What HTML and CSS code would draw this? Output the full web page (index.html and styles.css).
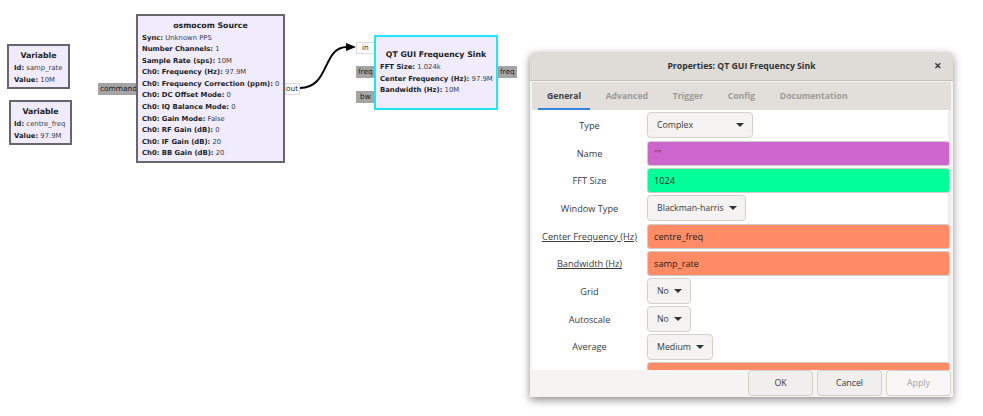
FILE: index.html
```html
<!DOCTYPE html>
<html lang="en">
  <head>
    <meta charset="UTF-8" />
    <meta name="viewport" content="width=device-width, initial-scale=1.0" />
    <title>Flow graph</title>
    <link rel="stylesheet" href="styles.css">
  </head>
  <body>
    <div id="canvas">
      <div class="port gray port-command">command</div>
      <div class="port port-out">out</div>
      <div class="port port-in">in</div>
      <div class="port gray port-freq">freq</div>
      <div class="port gray port-bw">bw</div>
      <div class="port gray port-freq-out">freq</div>

      <svg class="wire" width="60" height="60" viewBox="0 0 60 60">
        <path d="M0 51 C30 51 22 10 47 10" fill="none" stroke="#000" stroke-width="2" />
        <polygon points="46,6 56,10 46,14" fill="#000" />
      </svg>

      <div class="block var-rate">
        <h2>Variable</h2>
        <p><b>Id:</b> samp_rate</p>
        <p><b>Value:</b> 10M</p>
      </div>
      <div class="block var-freq">
        <h2>Variable</h2>
        <p><b>Id:</b> centre_freq</p>
        <p><b>Value:</b> 97.9M</p>
      </div>
      <div class="block source">
        <h2>osmocom Source</h2>
        <p><b>Sync:</b> Unknown PPS</p>
        <p><b>Number Channels:</b> 1</p>
        <p><b>Sample Rate (sps):</b> 10M</p>
        <p><b>Ch0: Frequency (Hz):</b> 97.9M</p>
        <p><b>Ch0: Frequency Correction (ppm):</b> 0</p>
        <p><b>Ch0: DC Offset Mode:</b> 0</p>
        <p><b>Ch0: IQ Balance Mode:</b> 0</p>
        <p><b>Ch0: Gain Mode:</b> False</p>
        <p><b>Ch0: RF Gain (dB):</b> 0</p>
        <p><b>Ch0: IF Gain (dB):</b> 20</p>
        <p><b>Ch0: BB Gain (dB):</b> 20</p>
      </div>
      <div class="block sink">
        <h2>QT GUI Frequency Sink</h2>
        <p><b>FFT Size:</b> 1.024k</p>
        <p><b>Center Frequency (Hz):</b> 97.9M</p>
        <p><b>Bandwidth (Hz):</b> 10M</p>
      </div>

      <div id="dialog">
        <div class="titlebar">
          <span class="title">Properties: QT GUI Frequency Sink</span>
          <span class="close">&#x2715;</span>
        </div>
        <div class="tabs">
          <span class="tab active">General</span>
          <span class="tab">Advanced</span>
          <span class="tab">Trigger</span>
          <span class="tab">Config</span>
          <span class="tab">Documentation</span>
        </div>
        <div class="form">
          <div class="row">
            <label>Type</label>
            <div class="combo combo-type">Complex<i class="arrow"></i></div>
          </div>
          <div class="row">
            <label>Name</label>
            <div class="entry purple">""</div>
          </div>
          <div class="row">
            <label>FFT Size</label>
            <div class="entry green">1024</div>
          </div>
          <div class="row">
            <label>Window Type</label>
            <div class="combo">Blackman-harris<i class="arrow"></i></div>
          </div>
          <div class="row">
            <label class="under">Center Frequency (Hz)</label>
            <div class="entry orange">centre_freq</div>
          </div>
          <div class="row">
            <label class="under">Bandwidth (Hz)</label>
            <div class="entry orange">samp_rate</div>
          </div>
          <div class="row">
            <label>Grid</label>
            <div class="combo">No<i class="arrow"></i></div>
          </div>
          <div class="row">
            <label>Autoscale</label>
            <div class="combo">No<i class="arrow"></i></div>
          </div>
          <div class="row">
            <label>Average</label>
            <div class="combo">Medium<i class="arrow"></i></div>
          </div>
          <div class="row">
            <label></label>
            <div class="entry orange"></div>
          </div>
        </div>
        <div class="footer">
          <button>OK</button>
          <button>Cancel</button>
          <button class="off">Apply</button>
        </div>
      </div>
    </div>
  </body>
</html>
```

FILE: styles.css
```css
html, body {
  margin: 0;
  background: #fff;
  overflow: hidden;
}
#canvas {
  position: relative;
  width: 983px;
  height: 416px;
  font-family: "DejaVu Sans", sans-serif;
}

/* Blocks of the flow graph */
.block {
  position: absolute;
  box-sizing: border-box;
  background: #f0ecfd;
  border: 2px solid #66666c;
  color: #222;
  font-size: 6.85px;
  line-height: 11.6px;
  padding: 0 4px;
  white-space: nowrap;
}
.block h2 {
  margin: 0 0 1px;
  font-size: 7.8px;
  line-height: 13px;
  text-align: center;
}
.block p {
  margin: 0;
  color: #3c3c44;
}
.block b {
  color: #1c1c24;
}
.var-rate { left: 7px; top: 44px; width: 63px; height: 45px; padding: 3px 5px 0; }
.var-freq { left: 9px; top: 100px; width: 63px; height: 45px; padding: 3px 3px 0; }
.source { left: 136px; top: 14px; width: 149px; height: 149px; padding-top: 3px; }
.source h2 { margin-bottom: 0.5px; }
.sink { left: 374px; top: 35px; width: 124px; height: 75px; padding-top: 11px; border-color: #1ee6f5; }

/* Ports */
.port {
  position: absolute;
  box-sizing: border-box;
  height: 12px;
  padding: 0 1px;
  background: #fff;
  border: 1px solid #dcdcdc;
  color: #333;
  font-size: 7.4px;
  line-height: 10px;
  white-space: nowrap;
}
.port.gray {
  background: #a4a4a4;
  border-color: #a4a4a4;
  color: #222;
}
.port-command { left: 98px; top: 83px; width: 38px; }
.port-out { left: 285px; top: 83px; width: 15px; padding: 0; }
.port-in { left: 356px; top: 42px; width: 19px; padding-left: 5px; }
.port-freq { left: 356px; top: 66px; width: 19px; }
.port-bw { left: 356px; top: 91px; width: 19px; padding-left: 3px; }
.port-freq-out { left: 498px; top: 66px; width: 19px; }

.wire {
  position: absolute;
  left: 300px;
  top: 37px;
}

/* Properties window */
#dialog {
  position: absolute;
  left: 530px;
  top: 52px;
  width: 423px;
  height: 345px;
  display: flex;
  flex-direction: column;
  overflow: hidden;
  background: #f5f4f2;
  border-radius: 5px 5px 0 0;
  box-shadow: 0 3px 9px rgba(0, 0, 0, 0.45);
  font-family: "Open Sans", sans-serif;
  font-size: 9.2px;
  color: #3a3a3a;
}
.titlebar {
  flex: none;
  height: 29px;
  display: flex;
  align-items: center;
  justify-content: center;
  position: relative;
  background: #dfdbd6;
  border-bottom: 1px solid #c4c0ba;
  box-sizing: border-box;
  font-size: 8.7px;
  font-weight: 700;
  color: #2e3436;
}
.close {
  position: absolute;
  right: 11px;
  top: 7px;
  font-size: 9px;
  font-weight: 700;
}
.tabs {
  flex: none;
  height: 29px;
  box-sizing: border-box;
  margin: 0 2px;
  border-top: 1px solid #f5f4f2;
  padding-left: 6px;
  display: flex;
  gap: 6.5px;
  background: #e2dfdb;
  font-size: 8.7px;
  font-weight: 700;
  color: #9b9b98;
}
.tab {
  padding: 8px 9px 0;
}
.tab.active {
  color: #3a3f42;
  border-bottom: 2px solid #3584e4;
  height: 18px;
}
.form {
  flex: 1;
  min-height: 0;
  margin: 0 2px;
  padding-top: 1.5px;
  overflow: hidden;
  background: linear-gradient(to left, #eeeeee 3px, #fff 3px);
}
.row {
  display: flex;
  align-items: center;
  height: 27.7px;
}
.row label {
  flex: none;
  width: 115px;
  text-align: center;
}
.row label.under {
  text-decoration: underline;
}
.entry {
  flex: 1;
  height: 25px;
  box-sizing: border-box;
  padding: 0 6px;
  line-height: 23px;
  margin-right: 1px;
  border: 1px solid #d0ccc6;
  border-radius: 3px;
  color: #222;
}
.purple { background: #cc66cc; color: #6a3a6a; }
.green { background: #00ff99; }
.orange { background: #ff8c66; }
.combo {
  height: 26px;
  box-sizing: border-box;
  padding: 0 8px 0 9px;
  display: flex;
  align-items: center;
  background: #f4f3f1;
  border: 1px solid #d3cfc9;
  border-radius: 4px;
  font-size: 8.8px;
}
.combo-type {
  width: 106px;
  justify-content: space-between;
}
.arrow {
  width: 0;
  height: 0;
  margin-left: 5px;
  border-left: 4px solid transparent;
  border-right: 4px solid transparent;
  border-top: 4px solid #2e3436;
}
.footer {
  flex: none;
  height: 27px;
  display: flex;
  justify-content: flex-end;
  gap: 4px;
  padding-right: 2px;
  background: #f5f4f2;
}
.footer button {
  width: 65px;
  height: 26px;
  padding: 0 0 1px;
  font: inherit;
  font-size: 8.8px;
  color: #3a3a3a;
  background: #f0efed;
  border: 1px solid #d3cfc9;
  border-radius: 4px;
}
.footer button.off {
  color: #a0a0a0;
  background: #f8f7f6;
}
```
